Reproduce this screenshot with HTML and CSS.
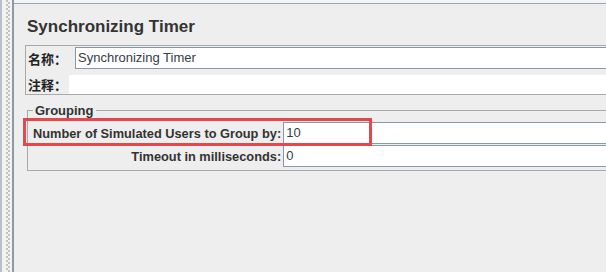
FILE: index.html
```html
<!DOCTYPE html>
<html lang="zh">
<head>
  <meta charset="UTF-8" />
  <title>Synchronizing Timer</title>
  <link rel="stylesheet" href="styles.css">
</head>
<body>

<div class="frame">
  <div class="splitter"></div>

  <div class="main">
    <div class="topbar"></div>

    <div class="content">
      <h1 class="title">Synchronizing Timer</h1>

      <div class="name-panel">
        <div class="row">
          <span class="label label-name">名称：</span>
          <div class="field">Synchronizing Timer</div>
        </div>
        <div class="row">
          <span class="label label-comment">注释：</span>
          <div class="field field-plain"></div>
        </div>
      </div>

      <fieldset class="group">
        <legend>Grouping</legend>
        <div class="group-grid">
          <span class="group-label">Number of Simulated Users to Group by:</span>
          <div class="field">10</div>
          <span class="group-label">Timeout in milliseconds:</span>
          <div class="field">0</div>
        </div>
      </fieldset>
    </div>
  </div>
</div>

<!-- annotation drawn over the form -->
<div class="highlight"></div>

</body>
</html>
```

FILE: styles.css
```css
body {
  margin: 0;
  height: 100vh;
  overflow: hidden;
  position: relative;
  background: #eeeeee;
  color: #333333;
  font-family: "Liberation Sans", Arial, "Noto Sans CJK SC", sans-serif;
}

.frame {
  display: flex;
  height: 100%;
}

.splitter {
  flex: none;
  width: 10px;
  border-left: 2px solid #b6c0ca;
  border-right: 2px solid #8e9aa6;
  background-color: #f2f2f2;
  background-image:
    linear-gradient(#c2c2c2 50%, transparent 50%),
    linear-gradient(#c2c2c2 50%, transparent 50%);
  background-size: 2px 4px;
  background-position: 4px 0, 6px 2px;
  background-repeat: repeat-y;
}

.main {
  flex: 1;
  min-width: 0;
  display: flex;
  flex-direction: column;
}

.topbar {
  height: 3px;
  background: #f4f4f4;
  border-bottom: 1px solid #9aa6b2;
}

.content {
  padding: 13px 0 0 11px;
  margin-right: -30px;
}

.title {
  margin: 0 0 8px 2px;
  font-size: 17px;
  line-height: 20px;
  font-weight: bold;
  color: #333333;
}

.name-panel {
  display: flex;
  flex-direction: column;
  gap: 6px;
  padding: 1px 0 0 1px;
  border: 1px solid #a9a9a9;
}

.row {
  display: flex;
  align-items: center;
}

.label {
  flex: none;
  padding-left: 1px;
  font-family: "Noto Sans CJK SC", sans-serif;
  font-size: 13px;
  font-weight: bold;
  color: #222222;
}

.label-name {
  width: 47px;
}

.label-comment {
  width: 41px;
}

.field {
  flex: 1;
  box-sizing: border-box;
  height: 22px;
  padding-left: 2px;
  border: 1px solid #8898a8;
  background: #ffffff;
  font-size: 13px;
  line-height: 20px;
  color: #333d48;
}

.field-plain {
  height: 19px;
  border: none;
}

.group {
  margin: 8px 0 0 2px;
  padding: 4px 0 3px 5px;
  border: 1px solid #a9a9a9;
}

.group legend {
  padding: 0 2px;
  font-size: 13px;
  line-height: 15px;
  font-weight: bold;
  color: #333333;
}

.group-grid {
  display: grid;
  grid-template-columns: auto 1fr;
  column-gap: 2px;
  row-gap: 1px;
}

.group-label {
  align-self: center;
  text-align: right;
  font-size: 12.8px;
  font-weight: bold;
  color: #333333;
}

.highlight {
  position: absolute;
  left: 23px;
  top: 118px;
  width: 349px;
  height: 28px;
  box-sizing: border-box;
  border: 3px solid #e5474b;
}
```
